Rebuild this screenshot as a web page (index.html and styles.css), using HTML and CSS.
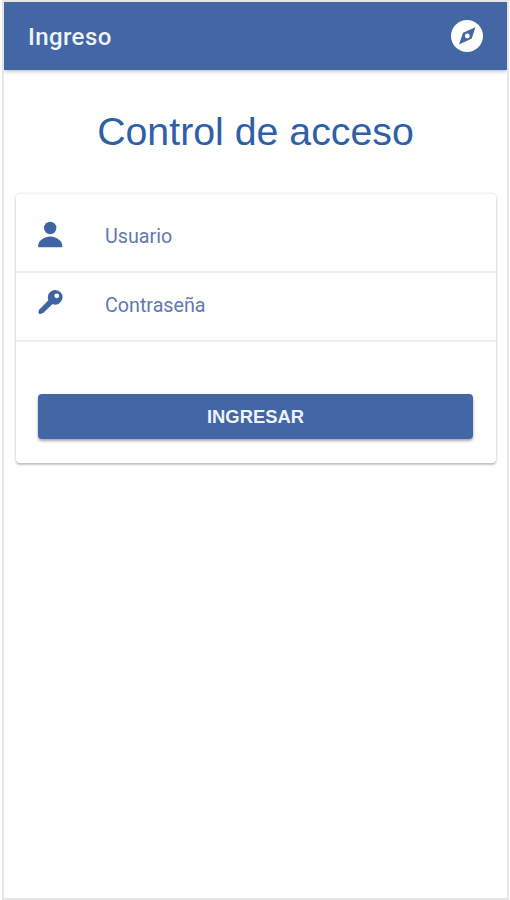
FILE: index.html
```html
<!DOCTYPE html>
<html lang="es">
<head>
<meta charset="utf-8">
<title>Ingreso</title>
<link rel="stylesheet" href="styles.css">
</head>
<body>
<div class="screen">
  <header class="toolbar">
    <span class="toolbar-title">Ingreso</span>
    <svg class="compass" viewBox="0 0 32 32" aria-hidden="true">
      <circle cx="16" cy="16" r="16" fill="#fff"/>
      <path fill="#4366a4" fill-rule="evenodd" d="M24.4 7.2 20.8 18.6 8 24.4 12 12.8ZM16.3 13.6a2.4 2.4 0 1 0 0 4.8 2.4 2.4 0 0 0 0-4.8Z"/>
    </svg>
  </header>
  <main>
    <h1 class="heading">Control de acceso</h1>
    <form class="card">
      <label class="row row-first">
        <svg class="icon icon-user" viewBox="0 0 26 28" aria-hidden="true">
          <circle cx="12.2" cy="7" r="6.2"/>
          <path d="M.2 26.3v-1.5C.2 19.6 6.7 15.6 12.2 15.6s12.1 4 12.1 9.2v1.5Z"/>
        </svg>
        <span class="label">Usuario</span>
      </label>
      <label class="row row-key">
        <svg class="icon" viewBox="0 0 26 28" aria-hidden="true">
          <path fill-rule="evenodd" d="M17.2 2a7.3 7.3 0 1 1-2.6 14.1L5.2 25.1l-3.6 1.1L.4 24.8l.5-2.8L10.4 12.2A7.4 7.4 0 0 1 17.2 2ZM18.7 5.4a2.4 2.4 0 1 0 0 4.8 2.4 2.4 0 0 0 0-4.8Z"/>
        </svg>
        <span class="label">Contraseña</span>
      </label>
      <div class="actions">
        <button class="submit" type="button">INGRESAR</button>
      </div>
    </form>
  </main>
</div>
</body>
</html>
```
FILE: styles.css
```css
* { box-sizing: border-box; }
body { margin: 0; background: #fff; font-family: Roboto, "Liberation Sans", sans-serif; }
.screen {
  height: 900px;
  margin: 0 1px 0 2px;
  border: 2px solid #e6e6e6;
  overflow: hidden;
}
.toolbar {
  height: 68px;
  padding: 0 24px;
  display: flex;
  align-items: center;
  justify-content: space-between;
  background: #4366a4;
  box-shadow: 0 1px 4px rgba(0, 0, 0, .3);
}
.toolbar-title { padding-top: 2px; color: #eef3ff; font-size: 24px; font-weight: 500; line-height: 28px; letter-spacing: .4px; }
.compass { width: 32px; height: 32px; }
.heading {
  margin: 38px 0 0;
  height: 46px;
  font: 400 39.3px/46px "Liberation Sans", sans-serif;
  text-align: center;
  color: #2f5fa6;
}
.card {
  margin: 40px 11px 0 12px;
  height: 269px;
  border-radius: 4px;
  background: #fff;
  box-shadow: 0 2px 2px rgba(0, 0, 0, .2), 0 0 3px rgba(0, 0, 0, .16);
}
.row {
  height: 69px;
  padding-left: 22px;
  display: flex;
  align-items: center;
  border-bottom: 2px solid #eee;
}
.row-first { height: 79px; padding-top: 8px; }
.row-key { padding-bottom: 2px; }
.icon { width: 26px; height: 28px; margin-right: 41px; margin-top: -7px; fill: #3f63a3; }
.icon-user { margin-top: -4px; }
.label { font-size: 19.7px; line-height: 24px; color: #6079b3; }
.actions { padding: 52px 23px 0 22px; }
.submit {
  display: block;
  width: 100%;
  height: 45px;
  padding: 0;
  border: 0;
  border-radius: 4px;
  background: #4366a4;
  color: #eef3ff;
  font: 700 18.4px/44px "Liberation Sans", sans-serif;
  box-shadow: 0 2px 3px rgba(0, 0, 0, .35);
}
```
